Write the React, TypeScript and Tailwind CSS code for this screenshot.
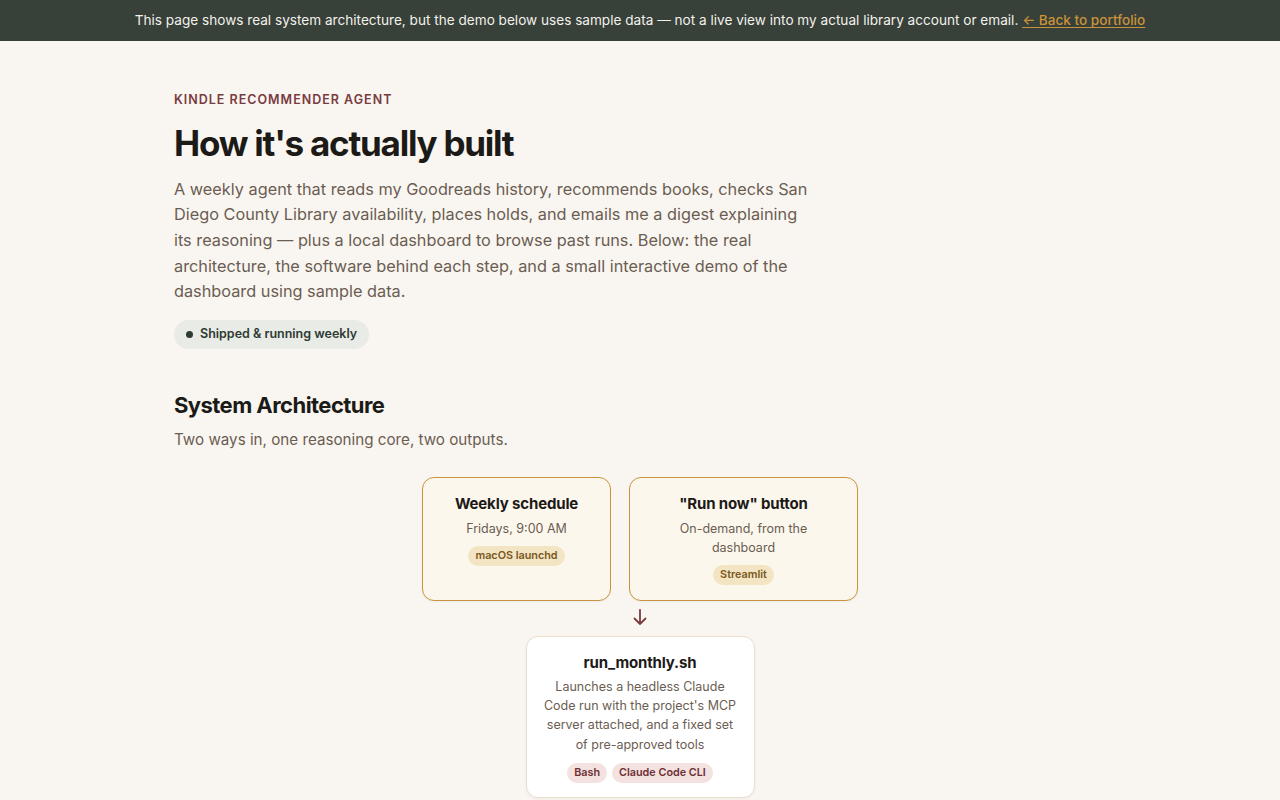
import React from "react";

const sans = { fontFamily: "Inter, 'Noto Sans', 'Liberation Sans', sans-serif" };

function Tag({ children, tone }: { children: React.ReactNode; tone: "gold" | "rose" }) {
  const cls =
    tone === "gold"
      ? "bg-[#f3e4c4] text-[#7a5820]"
      : "bg-[#f3e2df] text-[#6e2f35]";
  return (
    <span className={`inline-flex items-center rounded-full px-[7px] py-[3px] text-[10.8px] font-semibold leading-[14px] ${cls}`}>
      {children}
    </span>
  );
}

function TriggerCard({
  title,
  sub,
  tag,
  width,
}: {
  title: string;
  sub: string;
  tag: string;
  width: string;
}) {
  return (
    <div
      className={`${width} h-[124px] rounded-[12px] border border-[#c9933f] bg-[#fcf7ec] px-[24px] pt-[17px] text-center shadow-[0_1px_2px_rgba(0,0,0,0.04)]`}
    >
      <div className="text-[15px] font-bold leading-[18px] tracking-[-0.01em] text-[#1c1a17]">{title}</div>
      <div className="mt-[6px] text-[12.5px] leading-[19px] text-[#6b5d52]">{sub}</div>
      <div className="mt-[3px]">
        <Tag tone="gold">{tag}</Tag>
      </div>
    </div>
  );
}

export default function App() {
  return (
    <div className="min-h-[800px] bg-[#f9f6f1]" style={sans}>
      <div className="flex h-[41px] items-center justify-center bg-[#374039] text-[13.6px] text-[#f3f1ec]">
        <span>
          This page shows real system architecture, but the demo below uses sample data — not a live view into my
          actual library account or email.{" "}
          <a href="#" className="font-medium text-[#c9923a] underline underline-offset-2">
            ← Back to portfolio
          </a>
        </span>
      </div>

      <main className="mx-auto w-[932px] pt-[50px]">
        <div className="text-[12.5px] font-semibold uppercase tracking-[0.08em] text-[#7a3b3f]">
          Kindle Recommender Agent
        </div>
        <h1 className="mt-[11px] text-[35px] font-bold leading-[44px] tracking-[-0.035em] text-[#1c1a17]">
          How it's actually built
        </h1>
        <p className="mt-[12px] max-w-[640px] text-[16.3px] leading-[25.6px] text-[#6b5d52]">
          A weekly agent that reads my Goodreads history, recommends books, checks San Diego County Library
          availability, places holds, and emails me a digest explaining its reasoning — plus a local dashboard to
          browse past runs. Below: the real architecture, the software behind each step, and a small interactive demo
          of the dashboard using sample data.
        </p>
        <div className="mt-[15px] inline-flex h-[29px] items-center gap-[7px] rounded-full bg-[#e8ebe6] px-[12px] text-[12.5px] font-semibold text-[#2f3a33]">
          <span className="h-[7px] w-[7px] rounded-full bg-[#2f3a33]" />
          Shipped &amp; running weekly
        </div>

        <h2 className="mt-[42px] text-[22px] font-bold leading-[28px] tracking-[-0.025em] text-[#1c1a17]">
          System Architecture
        </h2>
        <p className="mt-[9px] text-[15.2px] leading-[24px] text-[#6b5d52]">
          Two ways in, one reasoning core, two outputs.
        </p>

        <div className="mt-[25px] flex flex-col items-center">
          <div className="flex gap-[18px]">
            <TriggerCard width="w-[189px]" title="Weekly schedule" sub="Fridays, 9:00 AM" tag="macOS launchd" />
            <TriggerCard width="w-[229px]" title={'"Run now" button'} sub="On-demand, from the dashboard" tag="Streamlit" />
          </div>
          <div className="flex h-[35px] items-center justify-center pb-[3px]">
            <svg width="16" height="18" viewBox="0 0 16 18" fill="none" stroke="#7a3b3f" strokeWidth="1.8" strokeLinecap="round" strokeLinejoin="round">
              <path d="M8 2v14M2.5 10.5 8 16l5.5-5.5" />
            </svg>
          </div>
          <div className="w-[229px] rounded-[12px] border border-[#ecdfcd] bg-white px-4 pb-[14px] pt-[17px] text-center shadow-[0_1px_3px_rgba(0,0,0,0.05)]">
            <div className="text-[15px] font-bold leading-[18px] tracking-[-0.01em] text-[#1c1a17]">run_monthly.sh</div>
            <div className="mt-[5px] text-[12.5px] leading-[19.3px] text-[#6b5d52]">
              Launches a headless Claude Code run with the project's MCP server attached, and a fixed set of
              pre-approved tools
            </div>
            <div className="mt-[9px] flex justify-center gap-[5px]">
              <Tag tone="rose">Bash</Tag>
              <Tag tone="rose">Claude Code CLI</Tag>
            </div>
          </div>
        </div>
      </main>
    </div>
  );
}
